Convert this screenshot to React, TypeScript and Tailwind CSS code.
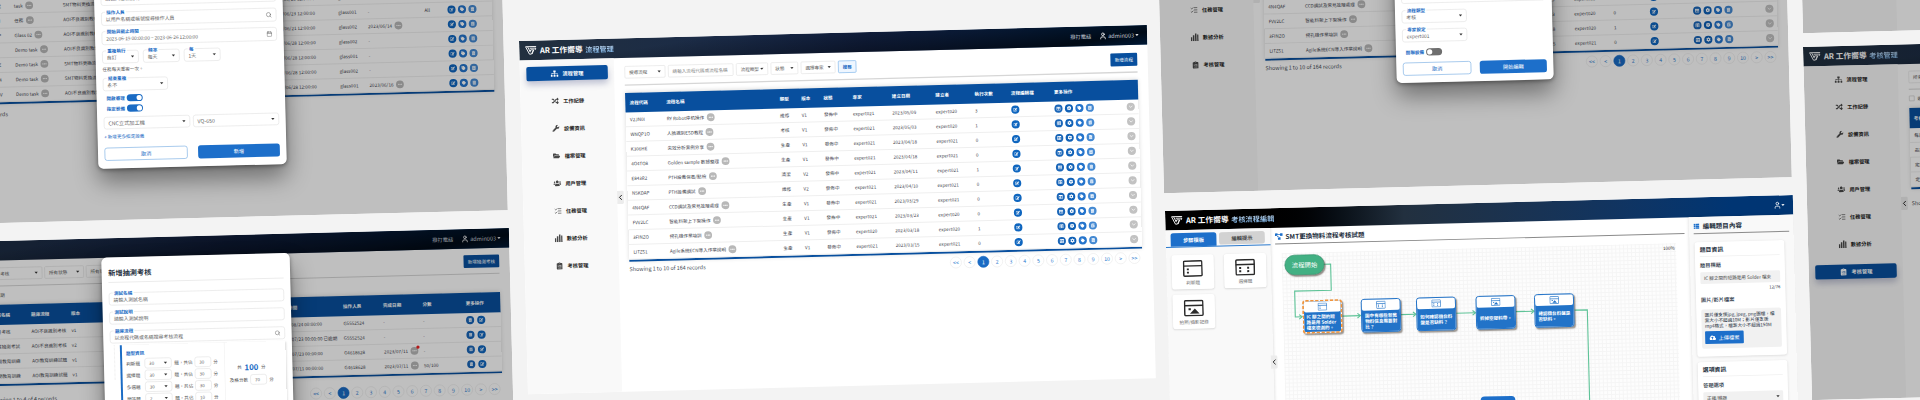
import React from 'react';
import {
  FaSitemap, FaRandom, FaWrench, FaFolderOpen, FaUsers, FaClipboardList, FaEdit, FaTable, FaCog, FaTag, FaTrashAlt,
  FaCloudUploadAlt, FaThList,
} from 'react-icons/fa';
import { ListChecks, User, Search, Calendar, ChevronLeft, ChevronDown, Ellipsis } from 'lucide-react';

type Node = React.ReactNode;

/* ---------- shared pieces ---------- */

function Logo() {
  return (
    <svg width="36" height="28" viewBox="0 0 36 28" fill="none" stroke="#fff" strokeWidth="2.8">
      <path d="M1 2h33M2 3l11 22h6l7-13h-9l-2 5" />
      <path d="M8 3l8 16M14 7h19l-3 6M26 12l-5 13" />
    </svg>
  );
}

function Caret({ c = 'border-t-[#333]' }: { c?: string }) {
  return <i className={`block h-0 w-0 shrink-0 border-x-[5px] border-t-[6px] border-x-transparent ${c}`} />;
}

function TopBar({ title, editor }: { title: string; editor?: boolean }) {
  return (
    <header
      className={`h-[60px] shrink-0 bg-linear-to-r text-white ${
        editor
          ? 'from-black from-15% via-[#22303f] via-38% to-[#003573] to-90%'
          : 'from-[#22303f] via-[#15264c] via-55% to-[#003573] to-95%'
      }`}
    >
      <div
        className={`flex h-full items-center pl-[18px] pr-[26px] ${
          editor ? '' : 'bg-[linear-gradient(172deg,transparent_25%,rgba(0,0,0,0.8)_88%,transparent_125%)]'
        }`}
      >
        <Logo />
        <span className="ml-[9px] text-[23.5px] font-bold">AR 工作嚮導</span>
        <span className="ml-2 bg-linear-to-b from-[#d4e8fb] to-[#6aa6dd] bg-clip-text text-[22px] font-bold text-transparent">
          {title}
        </span>
        <div className="ml-auto flex items-center text-base text-[#c3cad6]">
          {!editor && <span className="mr-6">撥打電話</span>}
          <User className="h-[26px] w-[24px] text-white" strokeWidth={2.4} />
          {!editor && <span className="ml-1 mr-1 text-[17px]">admin003</span>}
          <Caret c="border-t-white" />
        </div>
      </div>
    </header>
  );
}

function Bars() {
  return (
    <svg width="24" height="24" viewBox="0 0 24 24" fill="currentColor">
      <rect x="0" y="12" width="4.5" height="12" /><rect x="6.5" y="6" width="4.5" height="18" />
      <rect x="13" y="0" width="4.5" height="24" /><rect x="19.5" y="4" width="4.5" height="20" />
    </svg>
  );
}

const NAV: [string, Node][] = [
  ['流程管理', <FaSitemap size={25} />],
  ['工作紀錄', <FaRandom size={22} />],
  ['設備資訊', <FaWrench size={22} />],
  ['檔案管理', <FaFolderOpen size={22} />],
  ['用戶管理', <FaUsers size={24} />],
  ['任務管理', <ListChecks size={25} />],
  ['數據分析', <Bars />],
  ['考核管理', <FaClipboardList size={23} />],
];

function Sidebar({ active }: { active: number }) {
  return (
    <nav className="flex w-[288px] shrink-0 flex-col gap-10 bg-[#f9f9f9] pl-5 pt-5">
      {NAV.map(([label, icon], i) => (
        <div
          key={label}
          className={`flex h-11 w-[249px] items-center justify-center gap-3 rounded-[6px] ${
            i === active ? 'bg-[#084f9e] text-white shadow-[0_12px_20px_rgba(40,50,110,0.28)]' : 'text-[#484848]'
          }`}
        >
          <span className="flex w-6 justify-center">{icon}</span>
          <b className={`text-base ${i === active ? 'text-white' : 'text-[#222]'}`}>{label}</b>
        </div>
      ))}
    </nav>
  );
}

function Collapse({ at }: { at: string }) {
  return (
    <div className={`absolute flex h-10 w-5 items-center justify-center rounded-r-[4px] bg-[#ececec] text-[#222] ${at}`}>
      <ChevronLeft size={26} strokeWidth={2.6} className="shrink-0" />
    </div>
  );
}

function Screen({ at, children }: { at: string; children: Node }) {
  return (
    <section
      className={`absolute flex h-[1080px] w-[1920px] origin-top-left rotate-[-1.46deg] scale-[0.3271] flex-col overflow-hidden bg-white ${at}`}
    >
      {children}
    </section>
  );
}

const Shade = () => <div className="absolute inset-0 bg-black/25" />;

function Drop({ w, children }: { w: string; children: Node }) {
  return (
    <div className={`flex h-[38px] items-center justify-between rounded-[4px] border-2 border-[#e4e4e4] px-3 text-sm text-[#5c5c5c] ${w}`}>
      {children}
      <Caret />
    </div>
  );
}

const Dots = () => (
  <span className="relative flex h-6 w-6 shrink-0 items-center justify-center rounded-full bg-[#b8b8b8] text-white">
    <Ellipsis size={16} strokeWidth={3} />
  </span>
);

function Round({ c, children }: { c: string; children: Node }) {
  return <span className={`flex h-[25px] w-[25px] shrink-0 items-center justify-center rounded-full text-white ${c}`}>{children}</span>;
}
const EditDot = () => <Round c="bg-[#0f66bf]"><FaEdit size={13} /></Round>;
const ListDot = () => <Round c="bg-[#1a66b8]"><FaTable size={13} /></Round>;
const TagDot = () => <Round c="bg-[#2474cc]"><FaTag size={13} /></Round>;
const BinDot = () => <Round c="bg-[#4489d2]"><FaTrashAlt size={13} /></Round>;

function Grid({ cols, head, rows, headH }: { cols: string; head: string[]; rows: Node[][]; headH: string }) {
  return (
    <div className="border-b-[6px] border-[#084f9e] shadow-[0_-2px_14px_rgba(0,0,0,0.14)]">
      <div className={`grid items-center bg-[#084f9e] text-sm font-bold text-white ${cols} ${headH}`}>
        {head.map((h, i) => <div key={i} className="pl-[13px]">{h}</div>)}
      </div>
      {rows.map((r, i) => (
        <div key={i} className={`grid h-[45px] items-center border-b-[3px] border-[#efefef] text-sm text-[#3f454e] ${cols}`}>
          {r.map((c, j) => <div key={j} className="flex items-center gap-2 whitespace-nowrap pl-[13px]">{c}</div>)}
        </div>
      ))}
    </div>
  );
}

function Footer({ text, pad, paged }: { text: string; pad: string; paged?: boolean }) {
  const pages = ['<<', '<', '1', '2', '3', '4', '5', '6', '7', '8', '9', '10', '>', '>>'];
  return (
    <div className={`flex items-start justify-between pr-[6px] ${pad}`}>
      <span className="text-[16.5px] leading-6 text-[#4a5058]">{text}</span>
      {paged && (
        <div className="flex gap-[6px]">
          {pages.map((p) => (
            <span
              key={p}
              className={`flex h-9 w-9 items-center justify-center rounded-full border-2 text-base ${
                p === '1' ? 'border-[#1a6bc4] bg-[#1a6bc4] text-white' : 'border-[#ebebeb] text-[#2b7bd0]'
              }`}
            >
              {p}
            </span>
          ))}
        </div>
      )}
    </div>
  );
}

/* ---------- process list ---------- */

const FLOWS: [string, string, string, string, string, string, string, string][] = [
  ['V2JN0I', 'RY Robot停机操作', '維修', 'V1', 'expert021', '2023/05/09', 'expert020', '3'],
  ['WNQP1O', '人臉識別ESD教程', '考核', 'V1', 'expert021', '2023/05/03', 'expert020', '1'],
  ['K306HE', '失效分析案例分享', '生產', 'V1', 'expert021', '2023/04/18', 'expert021', '0'],
  ['4O4TO8', 'Golden sample 數據整理', '生產', 'V1', 'expert021', '2023/04/18', 'expert021', '0'],
  ['E843R2', 'PTH設備保養/點檢', '清潔', 'V2', 'expert021', '2023/04/11', 'expert021', '1'],
  ['N5KDAP', 'PTH設備調試', '維修', 'V2', 'expert021', '2023/04/10', 'expert021', '0'],
  ['4N4QAF', 'CCD調試及常見故障處理', '生產', 'V1', 'expert021', '2023/03/29', 'expert021', '0'],
  ['FVV2LC', '智能料架上下架操作', '生產', 'V1', 'expert021', '2023/03/23', 'expert020', '0'],
  ['3FINZO', '撈孔機作業培訓', '生產', 'V1', 'expert020', '2023/03/18', 'expert020', '1'],
  ['LITZS1', 'Agile系統ECN導入作業說明', '生產', 'V1', 'expert021', '2023/03/15', 'expert021', '0'],
];

function FlowList() {
  return (
    <>
      <TopBar title="流程管理" />
      <div className="flex flex-1">
        <Sidebar active={0} />
        <main className="flex flex-1 flex-col px-8 pt-6">
          <div className="flex items-center gap-2">
            <Drop w="w-[125px]">搜尋流程</Drop>
            <div className="flex h-[38px] w-[200px] items-center rounded-[4px] border-2 border-[#e4e4e4] px-3 text-sm text-[#888]">
              請輸入流程代碼或流程名稱
            </div>
            <Drop w="w-[98px]">流程類型</Drop>
            <Drop w="w-[84px]">狀態</Drop>
            <Drop w="w-[106px]">選擇專家</Drop>
            <div className="flex h-[38px] w-[56px] items-center justify-center rounded-[4px] border-2 border-[#7db4ea] bg-[#eef6ff] text-sm font-bold text-[#1a6bc4]">
              搜尋
            </div>
            <div className="ml-auto flex h-10 w-[82px] items-center justify-center rounded-[3px] bg-[#084f9e] text-sm text-white">
              新增流程
            </div>
          </div>
          <div className="mb-[22px] mt-[17px] h-1 bg-[#d6d6d6]" />
          <Grid
            headH="h-[60px]"
            cols="grid-cols-[112px_347px_66px_68px_89px_120px_133px_120px_111px_132px_221px_1fr]"
            head={['流程代碼', '流程名稱', '類型', '版本', '狀態', '專家', '建立日期', '建立者', '執行次數', '流程編輯檔', '更多操作', '']}
            rows={FLOWS.map((f) => [
              f[0], <>{f[1]}<Dots /></>, f[2], f[3], '發佈中', f[4], f[5], f[6], f[7], <EditDot />,
              <span className="flex gap-[7px]">
                <ListDot /><Round c="bg-[#0f60b6]"><FaCog size={14} /></Round><TagDot /><BinDot />
              </span>,
              <Round c="bg-[#c2c2c2]"><ChevronDown size={17} strokeWidth={3} /></Round>,
            ])}
          />
          <Footer text="Showing 1 to 10 of 164 records" pad="pt-[10px]" paged />
        </main>
      </div>
      <Collapse at="left-[288px] top-[466px]" />
    </>
  );
}

/* ---------- modals ---------- */

function Box({ label, w = '', h = 'h-10', children, tail }: { label?: string; w?: string; h?: string; children?: Node; tail?: Node }) {
  return (
    <div className={`relative flex shrink-0 items-center justify-between rounded-[8px] border-2 border-[#e3e3e3] px-3 text-[15px] text-[#666] ${w} ${h}`}>
      {label && (
        <b className="absolute left-[10px] top-[-9px] bg-white px-1 text-sm leading-4 text-[#1a6bc4]">{label}</b>
      )}
      <span className={label ? 'pt-[5px]' : ''}>{children}</span>
      {tail}
    </div>
  );
}

function Toggle({ label, on }: { label: string; on?: boolean }) {
  return (
    <div className="flex h-[22px] items-center gap-[6px] pl-[10px]">
      <b className="text-sm text-[#1a6bc4]">{label}</b>
      <span className={`flex h-[22px] w-[49px] items-center rounded-full px-[3px] ${on ? 'justify-end bg-[#1a6bc4]' : 'bg-[#6e6e6e]'}`}>
        <i className="h-4 w-4 rounded-full bg-white" />
      </span>
    </div>
  );
}

function Buttons({ ok, gap, mt }: { ok: string; gap: string; mt: string }) {
  return (
    <div className={`flex ${gap} ${mt}`}>
      <div className="flex h-10 flex-1 items-center justify-center rounded-[8px] border-2 border-[#7db0e4] text-base text-[#1a6bc4]">取消</div>
      <div className="flex h-10 flex-1 items-center justify-center rounded-[8px] bg-[#1d6fca] text-base text-white">{ok}</div>
    </div>
  );
}

const MODAL = 'absolute flex flex-col rounded-[16px] bg-white shadow-[0_40px_70px_rgba(0,0,0,0.42),0_4px_14px_rgba(0,0,0,0.4)]';

function FlowModal() {
  return (
    <div className={`${MODAL} left-[720px] top-[400px] w-[480px] px-5 pb-[22px] pt-[80px]`}>
      <Box h="h-10">請輸入流程說明</Box>
      <Box label="流程類型" w="mt-5 w-[199px]" tail={<Caret />}>考核</Box>
      <Box label="專家設定" w="mt-[18px] w-[199px]" tail={<Caret />}>expert001</Box>
      <div className="mt-5"><Toggle label="關聯設備" /></div>
      <Buttons ok="開始編輯" gap="gap-[26px]" mt="mt-5" />
    </div>
  );
}

function TaskModal() {
  return (
    <div className={`${MODAL} left-[672px] top-[300px] w-[576px] px-5 pb-[24px] pt-[82px]`}>
      <Box h="h-[42px]">請輸入任務說明</Box>
      <Box label="操作人員" w="mt-[19px]" h="h-[42px]" tail={<Search size={19} />}>以用戶名稱或帳號搜尋操作人員</Box>
      <Box label="開始與截止時間" w="mt-[17px]" h="h-[42px]" tail={<Calendar size={18} />}>
        <span className="tracking-[-0.3px]">2023-06-19 00:00:00 ~ 2023-06-26 12:00:00</span>
      </Box>
      <div className="mt-[17px] flex gap-[13px]">
        <Box label="重複執行" w="w-[112px]" tail={<Caret />}>自訂</Box>
        <Box label="頻率" w="w-[112px]" tail={<Caret />}>每天</Box>
        <Box label="每" w="w-[112px]" tail={<Caret />}>1天</Box>
      </div>
      <span className="mt-[7px] text-sm leading-5 text-[#555]">任務每天重複一次。</span>
      <Box label="結束重複" w="mt-[17px] w-[199px]" tail={<Caret />}>永不</Box>
      <div className="mt-[11px] flex flex-col gap-[10px]">
        <Toggle label="開啟審理" on />
        <Toggle label="指定設備" on />
      </div>
      <div className="mt-[14px] flex gap-[9px]">
        <Box w="flex-1" h="h-[38px]" tail={<Caret />}><span className="text-base">CNC立式加工機</span></Box>
        <Box w="flex-1" h="h-[38px]" tail={<Caret />}><span className="text-base">VQ-650</span></Box>
      </div>
      <span className="mt-[12px] text-sm leading-5 text-[#1a6bc4]">+ 新增更多指定設備</span>
      <Buttons ok="新增" gap="gap-[32px]" mt="mt-6" />
    </div>
  );
}

function ExamModal() {
  return (
    <div className={`${MODAL} left-[672px] top-[59px] h-[820px] w-[576px] px-5 pt-6`}>
      <b className="text-[22px] leading-[44px] text-[#25303e]">新增抽測考核</b>
      <div className="mt-[7px] h-[3px] bg-[#ececec]" />
      <Box label="測試名稱" w="mt-[30px]" h="h-[39px]">請輸入測試名稱</Box>
      <Box label="測試說明" w="mt-[19px]" h="h-[39px]">請輸入測試說明</Box>
      <Box label="題庫流程" w="mt-[19px]" h="h-[39px]" tail={<Search size={18} />}>以流程代碼或名稱搜尋考核流程</Box>
      <div className="mt-[6px] flex">
        <div className="h-[106px] w-[30px] shrink-0 pl-3"><div className="h-full w-2 border-l-2 border-dotted border-[#ddd]" /></div>
        <div className="flex h-[300px] flex-1 border-l-[6px] border-[#1a6bc4] text-sm text-[#555] shadow-[3px_2px_6px_rgba(0,0,0,0.12)]">
          <div className="flex w-[314px] shrink-0 flex-col gap-1 border-r-2 border-[#f2f2f2] pl-3 pt-[15px]">
            <b className="mb-[2px] leading-5 text-[#1a6bc4]">題型資訊</b>
            {[['判斷題', '30', '30'], ['選擇題', '30', '30'], ['多選題', '30', '30'], ['問答題', '2', '10']].map(([n, a, b]) => (
              <div key={n} className="flex h-8 items-center">
                <span className="w-[56px]">{n}</span>
                <Box w="w-[83px]" h="h-8" tail={<Caret />}><span className="text-sm">{a}</span></Box>
                <span className="w-[70px] pl-2">題，共佔</span>
                <Box w="w-[51px]" h="h-8"><span className="text-sm">{b}</span></Box>
                <span className="pl-[6px]">分</span>
              </div>
            ))}
          </div>
          <div className="flex flex-col items-center gap-[7px] pl-[13px] pt-[60px]">
            <div className="flex items-center gap-2 leading-8">共 <b className="text-2xl leading-8 text-[#1a6bc4]">100</b> 分</div>
            <div className="flex items-center gap-[7px]">及格分數 <Box w="w-[51px]" h="h-8"><span className="text-sm">70</span></Box> 分</div>
          </div>
        </div>
      </div>
    </div>
  );
}

/* ---------- task list & exam list ---------- */

function Filters({ action }: { action: string }) {
  return (
    <>
      <div className="flex items-center gap-[6px]">
        <Drop w="w-[171px]">所有考核</Drop>
        <Drop w="w-[121px]">所有狀態</Drop>
        <Drop w="w-[121px]">所有狀態</Drop>
        <div className="ml-auto flex h-[39px] w-[109px] items-center justify-center rounded-[3px] bg-[#084f9e] text-sm text-white">{action}</div>
      </div>
      <div className="mt-[17px] h-[3px] bg-[#d6d6d6]" />
      <div className="mb-[20px] mt-[16px] flex h-5 items-center gap-[9px] text-sm text-[#555]">
        <span className="h-[17px] w-[17px] border-2 border-[#ccc]" />逾期
      </div>
    </>
  );
}

function TaskList() {
  const rows: [string, string, string, string, string, string, string][] = [
    ['A8K2LQ', 'Demo task', 'SMT物料更換流程', '2023/06/23', 'glass001', '', ''],
    ['R7XW0P', 'Demo task', 'AOI不良識別教學', '2023/06/23', 'glass001', '', ''],
    ['T52HMZ', 'Demo task', 'SMT物料更換流程', '2023/06/23', 'glass001', '', ''],
    ['Q4NB7Z', 'task', 'SMT物料更換流程', '2023/06/23', 'glass001', '', ''],
    ['W9DK1I', '任務', 'AOI不良識別教學', '2023/06/23', 'glass001', '-', 'All'],
    ['V83MTP', 'Glass 02', 'AOI不良識別教學', '2023/06/21', 'glass002', '2023/06/14', ''],
    ['J6LQ2I', 'Demo task', 'AOI不良識別教學', '2023/06/28', 'glass002', '-', ''],
    ['B1RS7Z', 'Demo task', 'SMT物料更換流程', '2023/06/28', 'glass001', '-', ''],
    ['C5XN84', 'Demo task', 'SMT物料更換流程', '2023/06/28', 'glass002', '-', ''],
    ['H2PK3V', 'Demo task', 'AOI不良識別教學', '2023/06/28', 'glass001', '2023/06/16', ''],
  ];
  return (
    <>
      <TopBar title="任務管理" />
      <div className="flex flex-1">
        <Sidebar active={5} />
        <main className="flex flex-1 flex-col px-8 pt-5">
          <Filters action="新增任務" />
          <Grid
            headH="h-[66px]"
            cols="grid-cols-[93px_150px_639px_202px_90px_174px_70px_1fr]"
            head={['任務代碼', '任務名稱', '流程名稱', '截止時間', '操作人員', '完成日期', '分數', '更多操作']}
            rows={rows.map((r) => [
              r[0], <>{r[1]}<Dots /></>, r[2], `${r[3]} 12:00:00`, r[4],
              r[5].length > 1 ? <>{r[5]}<Dots /></> : r[5], r[6],
              <span className="flex gap-[7px]"><EditDot /><TagDot /><BinDot /></span>,
            ])}
          />
          <Footer text="10 records" pad="pt-[18px]" />
        </main>
      </div>
    </>
  );
}

function ExamList() {
  const ops = <span className="flex gap-[9px]"><Round c="bg-[#1a66b8]"><FaTrashAlt size={12} /></Round><EditDot /></span>;
  const alert = (
    <span className="relative">
      <Dots />
      <i className="absolute -right-1 -top-1 h-[10px] w-[10px] rounded-full bg-[#f02020]" />
    </span>
  );
  return (
    <>
      <TopBar title="考核管理" />
      <div className="flex flex-1">
        <Sidebar active={7} />
        <main className="flex flex-1 flex-col px-8 pt-5">
          <Filters action="新增抽測考核" />
          <Grid
            headH="h-[62px]"
            cols="grid-cols-[120px_122px_636px_196px_122px_121px_132px_1fr]"
            head={['考核名稱', '題庫流程', '版本', '截止時間', '操作人員', '完成日期', '分數', '更多操作']}
            rows={[
              ['每月考核', 'AOI不良識別考核', 'v1', '2023/08/24 00:00:00', 'G5552524', '-', '-', ops],
              ['品質抽測考試', 'AOI不良識別考核', 'v2', '2023/07/23 00:00:00 已逾期', 'G5552524', '-', '-', ops],
              ['定期教育訓練', 'AOI教育訓練試題', 'v1', '2023/07/23 00:00:00', 'G4618628', <>2023/07/11{alert}</>, '-', ops],
              ['定期教育訓練', 'AOI教育訓練試題', 'v1', '2023/07/11 00:00:00', 'G4618628', <>2023/07/11<Dots /></>, '50/100', ops],
            ]}
          />
          <Footer text="Showing 1 to 4 of 4 records" pad="pt-[30px]" paged />
        </main>
      </div>
      <Collapse at="left-[288px] top-[466px]" />
    </>
  );
}

/* ---------- flow editor ---------- */

function Tile({ kind, size, c }: { kind: 'judge' | 'choice' | 'photo'; size: string; c: string }) {
  return (
    <svg className={`${size} ${c}`} viewBox="0 0 60 50" fill="none" stroke="currentColor" strokeWidth="4.4">
      <rect x="2.5" y="2.5" width="55" height="45" rx="3" />
      <path d="M2 17h56" />
      {kind === 'judge' && <path d="M12 27h6M12 37h6" strokeWidth="5.5" />}
      {kind === 'choice' && <path d="M12 27h6M12 37h6M36 27h6M36 37h6" strokeWidth="6" />}
      {kind === 'photo' && <path d="M18 42l15-16 14 16zM14 25h7v6h-7z" fill="currentColor" stroke="none" />}
    </svg>
  );
}

function Template({ kind, label }: { kind: 'judge' | 'choice' | 'photo'; label: string }) {
  return (
    <div className="flex h-[105px] w-[129px] flex-col items-center rounded-[8px] bg-white pt-[16px] shadow-[0_2px_6px_rgba(0,0,0,0.16)]">
      <Tile kind={kind} size="h-[52px] w-[61px]" c="text-[#2a2a2a]" />
      <span className="mt-[6px] text-sm text-[#777]">{label}</span>
    </div>
  );
}

function Step({ at, kind, dashed, children }: { at: string; kind: 'judge' | 'choice' | 'photo'; dashed?: boolean; children: Node }) {
  return (
    <div
      className={`absolute flex h-[103px] w-[122px] flex-col overflow-hidden rounded-[10px] bg-[#2273c8] bg-clip-padding shadow-[4px_5px_4px_rgba(60,50,40,0.5)] ${
        dashed ? 'border-[5px] border-dashed border-[#f0933a]' : 'border-[3px] border-[#2273c8]'
      } ${at}`}
    >
      <div className="flex h-[33px] shrink-0 items-center justify-center rounded-b-[6px] bg-white">
        <Tile kind={kind} size="h-[25px] w-[29px]" c="text-[#2273c8]" />
      </div>
      <p className={`flex flex-1 items-center text-[14px] font-bold leading-[17px] text-white ${dashed ? 'px-[7px]' : 'px-[9px]'}`}>{children}</p>
    </div>
  );
}

function Editor() {
  return (
    <>
      <TopBar title="考核流程編輯" editor />
      <div className="flex flex-1">
        <aside className="w-[320px] shrink-0 bg-[#f9f9f9] shadow-[2px_0_8px_rgba(0,0,0,0.12)]">
          <div className="flex gap-[8px] border-b-[3px] border-[#2a79cd] pl-[15px] pt-[9px] text-base font-bold">
            <div className="flex h-[41px] w-[140px] items-center justify-center rounded-t-[8px] bg-[#1d6fca] text-white">步驟模板</div>
            <div className="flex h-[38px] w-[140px] items-center justify-center rounded-[8px] bg-[#d2d2d2] text-[#444]">編輯提示</div>
          </div>
          <div className="grid grid-cols-[129px_129px] gap-x-[31px] gap-y-[16px] pl-4 pt-[23px]">
            <Template kind="judge" label="判斷題" />
            <Template kind="choice" label="選擇題" />
            <Template kind="photo" label="拍照/攝影記錄" />
          </div>
        </aside>
        <main className="flex flex-1 flex-col px-[14px]">
          <div className="flex h-[51px] items-center gap-2 border-b-[3px] border-[#8a8a8a] pt-[6px] text-xl font-bold text-[#25303e]">
            <svg width="24" height="22" viewBox="0 0 24 22" fill="#1d6fca">
              <path d="M0 1h8v8H0zM16 1h8v8h-8zM9 13h8v8H9zM8 4h8v2H8zM5 8l6 7 2-2-6-6z" />
            </svg>
            SMT更換物料流程考核試題
          </div>
          <div className="ml-[19px] mr-[27px] mt-[27px] flex-1 bg-[#fdfdfd] bg-[linear-gradient(#f5f5f5_2px,transparent_2px),linear-gradient(90deg,#f5f5f5_2px,transparent_2px)] bg-[size:12px_12px] pr-1 pt-1 text-right text-sm text-[#333]">
            100%
          </div>
        </main>
        <aside className="flex w-[320px] shrink-0 flex-col bg-[#f9f9f9] px-[14px] text-[#25303e] shadow-[0_0_10px_rgba(0,0,0,0.16)]">
          <div className="flex h-[52px] items-center gap-[10px] border-b-[3px] border-[#8a8a8a] pt-[6px] text-xl font-bold">
            <FaThList size={18} className="text-[#1d6fca]" />編輯題目內容
          </div>
          <div className="ml-[2px] mt-[25px] h-[350px] w-[274px] rounded-[8px] bg-white px-[15px] pt-[9px] shadow-[0_2px_8px_rgba(0,0,0,0.14)]">
            <b className="block border-b-2 border-[#f0f0f0] pb-[8px] text-lg leading-[26px]">題目資訊</b>
            <div className="mt-[13px] text-base font-medium leading-6">題目標題</div>
            <div className="mt-[10px] flex h-[36px] items-center whitespace-nowrap rounded-[4px] bg-[#f1f1f1] px-[11px] text-[14px] text-[#444]">
              IC 腳之間的短路是用 Solder 檔來
            </div>
            <div className="mt-[4px] text-right text-[13px] leading-5">12/76</div>
            <div className="mt-[12px] text-base font-medium leading-6">圖片/影片檔案</div>
            <div className="mt-[18px] h-[120px] rounded-[6px] bg-[#f1f1f1] px-[10px] pt-[8px]">
              <p className="whitespace-nowrap text-[14px] leading-[17px]">圖片僅支援jpg, jpeg, png圖檔，檔<br />案大小不超過10M；影片僅支援<br />mp4格式，檔案大小不超過150M</p>
              <div className="mt-2 flex h-[39px] w-[118px] items-center justify-center gap-2 rounded-[3px] bg-[#1d6fca] text-base text-white">
                <FaCloudUploadAlt size={20} />上傳檔案
              </div>
            </div>
          </div>
          <div className="ml-[2px] mt-[17px] h-[500px] w-[274px] rounded-[8px] bg-white px-[15px] pt-[9px] shadow-[0_2px_8px_rgba(0,0,0,0.14)]">
            <b className="block border-b-2 border-[#f0f0f0] pb-[8px] text-lg leading-[26px]">選項資訊</b>
            <div className="mt-[13px] text-base font-medium leading-6">答題選項</div>
            <div className="mt-[10px] flex h-[36px] items-center justify-between rounded-[4px] bg-[#f1f1f1] px-[11px] text-sm text-[#444]">
              正確/錯誤<Caret />
            </div>
          </div>
        </aside>
      </div>
      <svg className="absolute left-0 top-0" width="1600" height="1080" fill="none" stroke="#5fc398" strokeWidth="3.4">
        <path d="M482 175h20v80H390v79h20M534 335h54M713 335h45M882 335h58M1064 335h55M1244 335h39v745" />
        <path d="M402 327l9 7-9 7M580 328l9 7-9 7M750 328l9 7-9 7M932 328l9 7-9 7M1111 328l9 7-9 7" />
      </svg>
      <div className="absolute left-[361px] top-[144px] flex h-[62px] w-[122px] items-center justify-center rounded-full border-2 border-[#2f8f69] bg-[#42b083] text-[19.5px] text-white shadow-[4px_5px_4px_rgba(60,50,40,0.55)]">
        流程開始
      </div>
      <Step at="left-[412px] top-[283px]" kind="judge" dashed>IC 腳之間的短路是用 Solder 檔來檢測的。</Step>
      <Step at="left-[591px] top-[284px]" kind="choice">圖中有哪些新舊物料信息需要對比？</Step>
      <Step at="left-[760px] top-[284px]" kind="choice">如何確認機台料盤是否缺料？</Step>
      <Step at="left-[942px] top-[284px]" kind="photo">拆掉空膠料帶。</Step>
      <Step at="left-[1121px] top-[283px]" kind="photo">確認機台料盤是否缺料。</Step>
      <div className="absolute left-[950px] top-[592px] h-[100px] w-[106px] rounded-[12px] bg-[#1d6fca]" />
      <Collapse at="left-[312px] top-[450px]" />
    </>
  );
}

export default function App() {
  return (
    <div className='relative h-[400px] w-[1920px] overflow-hidden bg-[#f3f3f3] font-["Noto_Sans_CJK_TC",sans-serif]'>
      <Screen at="left-[-129px] top-[-127.5px]"><TaskList /><Shade /><TaskModal /></Screen>
      <Screen at="left-[-119px] top-[244px]"><ExamList /><Shade /><ExamModal /></Screen>
      <Screen at="left-[519px] top-[41.3px]"><FlowList /></Screen>
      <Screen at="left-[1155px] top-[-160px]"><FlowList /><Shade /><FlowModal /></Screen>
      <Screen at="left-[1165px] top-[211px]"><Editor /></Screen>
      <Screen at="left-[1793.5px] top-[-320px]"><ExamList /><Shade /></Screen>
      <Screen at="left-[1803px] top-[47px]"><ExamList /><Shade /></Screen>
    </div>
  );
}
